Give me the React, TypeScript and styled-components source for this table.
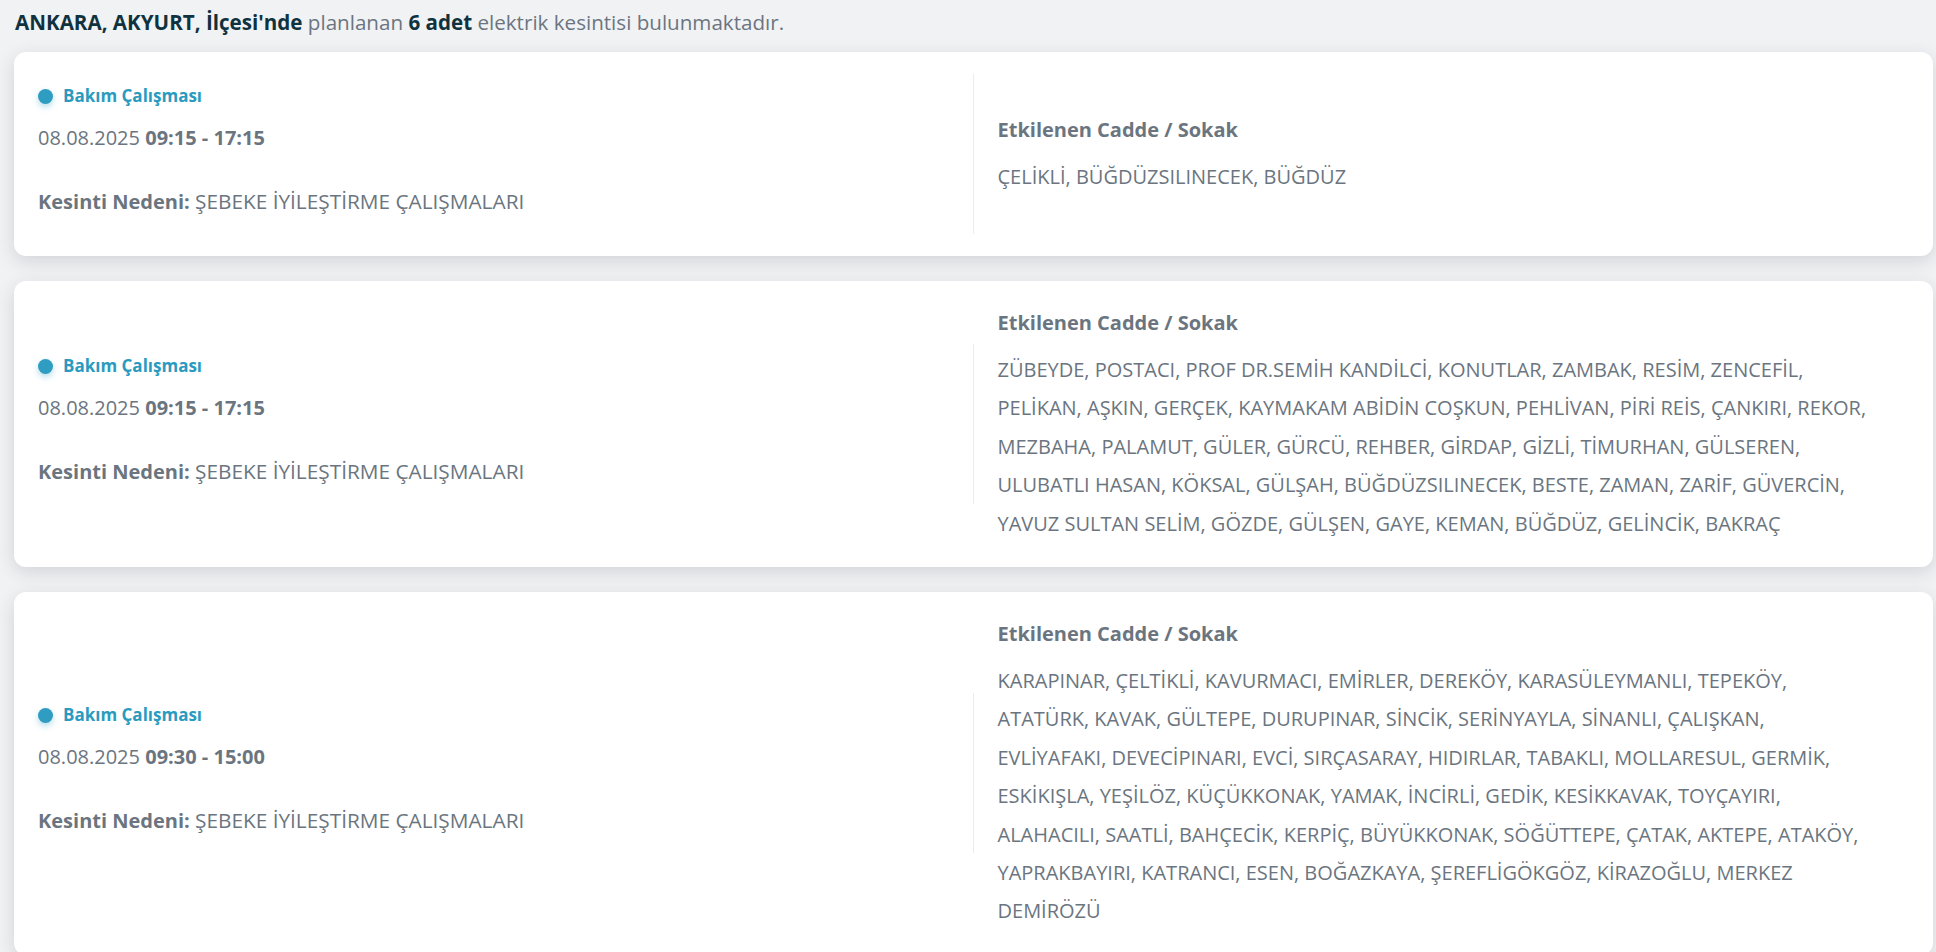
import React from "react";
import styled, { createGlobalStyle } from "styled-components";

const GlobalStyle = createGlobalStyle`
  html, body {
    margin: 0;
    padding: 0;
    background: #f1f2f4;
  }
  body {
    font-family: "Open Sans", "Noto Sans", sans-serif;
    color: #6b7580;
  }
  * { box-sizing: border-box; }
`;

const Page = styled.main`
  padding: 8px 3px 40px 14px;
`;

const Summary = styled.p`
  margin: 0 0 16px 1px;
  font-size: 20.6px;
  line-height: 28px;
  color: #6b7580;
  white-space: nowrap;
`;

const Strong = styled.strong`
  font-weight: 700;
  color: #10323f;
`;

const List = styled.div`
  display: flex;
  flex-direction: column;
  gap: 25px;
`;

const Card = styled.section`
  display: flex;
  align-items: center;
  padding: 22px 24px;
  background: #ffffff;
  border-radius: 12px;
  box-shadow: 0 5px 18px rgba(30, 40, 55, 0.15);
`;

const InfoCol = styled.div`
  flex: 0 0 50%;
  padding: 10px 0 18px 0;
  border-right: 1px solid #ececee;
  display: flex;
  flex-direction: column;
`;

const TypeLabel = styled.div`
  display: flex;
  align-items: center;
  gap: 10px;
  font-size: 17px;
  line-height: 24px;
  font-weight: 700;
  color: #2a9bbf;
`;

const Dot = styled.span`
  width: 15px;
  height: 15px;
  border-radius: 50%;
  background: #2f9cc2;
  box-shadow: 0 3px 6px rgba(47, 156, 194, 0.35);
  flex: none;
`;

const DateLine = styled.div`
  margin-top: 16px;
  font-size: 20px;
  line-height: 28px;
`;

const Reason = styled.div`
  margin-top: 35px;
  font-size: 20px;
  line-height: 28px;
  white-space: nowrap;
`;

const ReasonText = styled.span`
  font-size: 20.8px;
`;

const Bold = styled.b`
  font-weight: 700;
`;

const StreetCol = styled.div`
  flex: 1 1 50%;
  padding: 8px 0 2px 24px;
`;

const StreetTitle = styled.h3`
  margin: 0 0 16px 0;
  font-size: 20px;
  line-height: 24px;
  font-weight: 700;
  color: #6b7580;
`;

const Streets = styled.p`
  margin: 0;
  font-size: 20px;
  line-height: 38.4px;
`;

const StreetLine = styled.span`
  display: block;
  white-space: nowrap;
`;

type Outage = {
  date: string;
  from: string;
  to: string;
  reason: string;
  streets: string[];
};

const outages: Outage[] = [
  {
    date: "08.08.2025",
    from: "09:15",
    to: "17:15",
    reason: "ŞEBEKE İYİLEŞTİRME ÇALIŞMALARI",
    streets: ["ÇELİKLİ, BÜĞDÜZSILINECEK, BÜĞDÜZ"],
  },
  {
    date: "08.08.2025",
    from: "09:15",
    to: "17:15",
    reason: "ŞEBEKE İYİLEŞTİRME ÇALIŞMALARI",
    streets: [
      "ZÜBEYDE, POSTACI, PROF DR.SEMİH KANDİLCİ, KONUTLAR, ZAMBAK, RESİM, ZENCEFİL,",
      "PELİKAN, AŞKIN, GERÇEK, KAYMAKAM ABİDİN COŞKUN, PEHLİVAN, PİRİ REİS, ÇANKIRI, REKOR,",
      "MEZBAHA, PALAMUT, GÜLER, GÜRCÜ, REHBER, GİRDAP, GİZLİ, TİMURHAN, GÜLSEREN,",
      "ULUBATLI HASAN, KÖKSAL, GÜLŞAH, BÜĞDÜZSILINECEK, BESTE, ZAMAN, ZARİF, GÜVERCİN,",
      "YAVUZ SULTAN SELİM, GÖZDE, GÜLŞEN, GAYE, KEMAN, BÜĞDÜZ, GELİNCİK, BAKRAÇ",
    ],
  },
  {
    date: "08.08.2025",
    from: "09:30",
    to: "15:00",
    reason: "ŞEBEKE İYİLEŞTİRME ÇALIŞMALARI",
    streets: [
      "KARAPINAR, ÇELTİKLİ, KAVURMACI, EMİRLER, DEREKÖY, KARASÜLEYMANLI, TEPEKÖY,",
      "ATATÜRK, KAVAK, GÜLTEPE, DURUPINAR, SİNCİK, SERİNYAYLA, SİNANLI, ÇALIŞKAN,",
      "EVLİYAFAKI, DEVECİPINARI, EVCİ, SIRÇASARAY, HIDIRLAR, TABAKLI, MOLLARESUL, GERMİK,",
      "ESKİKIŞLA, YEŞİLÖZ, KÜÇÜKKONAK, YAMAK, İNCİRLİ, GEDİK, KESİKKAVAK, TOYÇAYIRI,",
      "ALAHACILI, SAATLİ, BAHÇECİK, KERPİÇ, BÜYÜKKONAK, SÖĞÜTTEPE, ÇATAK, AKTEPE, ATAKÖY,",
      "YAPRAKBAYIRI, KATRANCI, ESEN, BOĞAZKAYA, ŞEREFLİGÖKGÖZ, KİRAZOĞLU, MERKEZ",
      "DEMİRÖZÜ",
    ],
  },
];

export default function App() {
  return (
    <>
      <GlobalStyle />
      <Page>
        <Summary>
          <Strong>ANKARA, AKYURT, İlçesi'nde</Strong> planlanan <Strong>6 adet</Strong> elektrik kesintisi bulunmaktadır.
        </Summary>
        <List>
          {outages.map((o, i) => (
            <Card key={i}>
              <InfoCol>
                <TypeLabel>
                  <Dot />
                  Bakım Çalışması
                </TypeLabel>
                <DateLine>
                  {o.date} <Bold>{o.from} - {o.to}</Bold>
                </DateLine>
                <Reason>
                  <Bold>Kesinti Nedeni:</Bold> <ReasonText>{o.reason}</ReasonText>
                </Reason>
              </InfoCol>
              <StreetCol>
                <StreetTitle>Etkilenen Cadde / Sokak</StreetTitle>
                <Streets>
                  {o.streets.map((line, j) => (
                    <StreetLine key={j}>{line}</StreetLine>
                  ))}
                </Streets>
              </StreetCol>
            </Card>
          ))}
        </List>
      </Page>
    </>
  );
}
